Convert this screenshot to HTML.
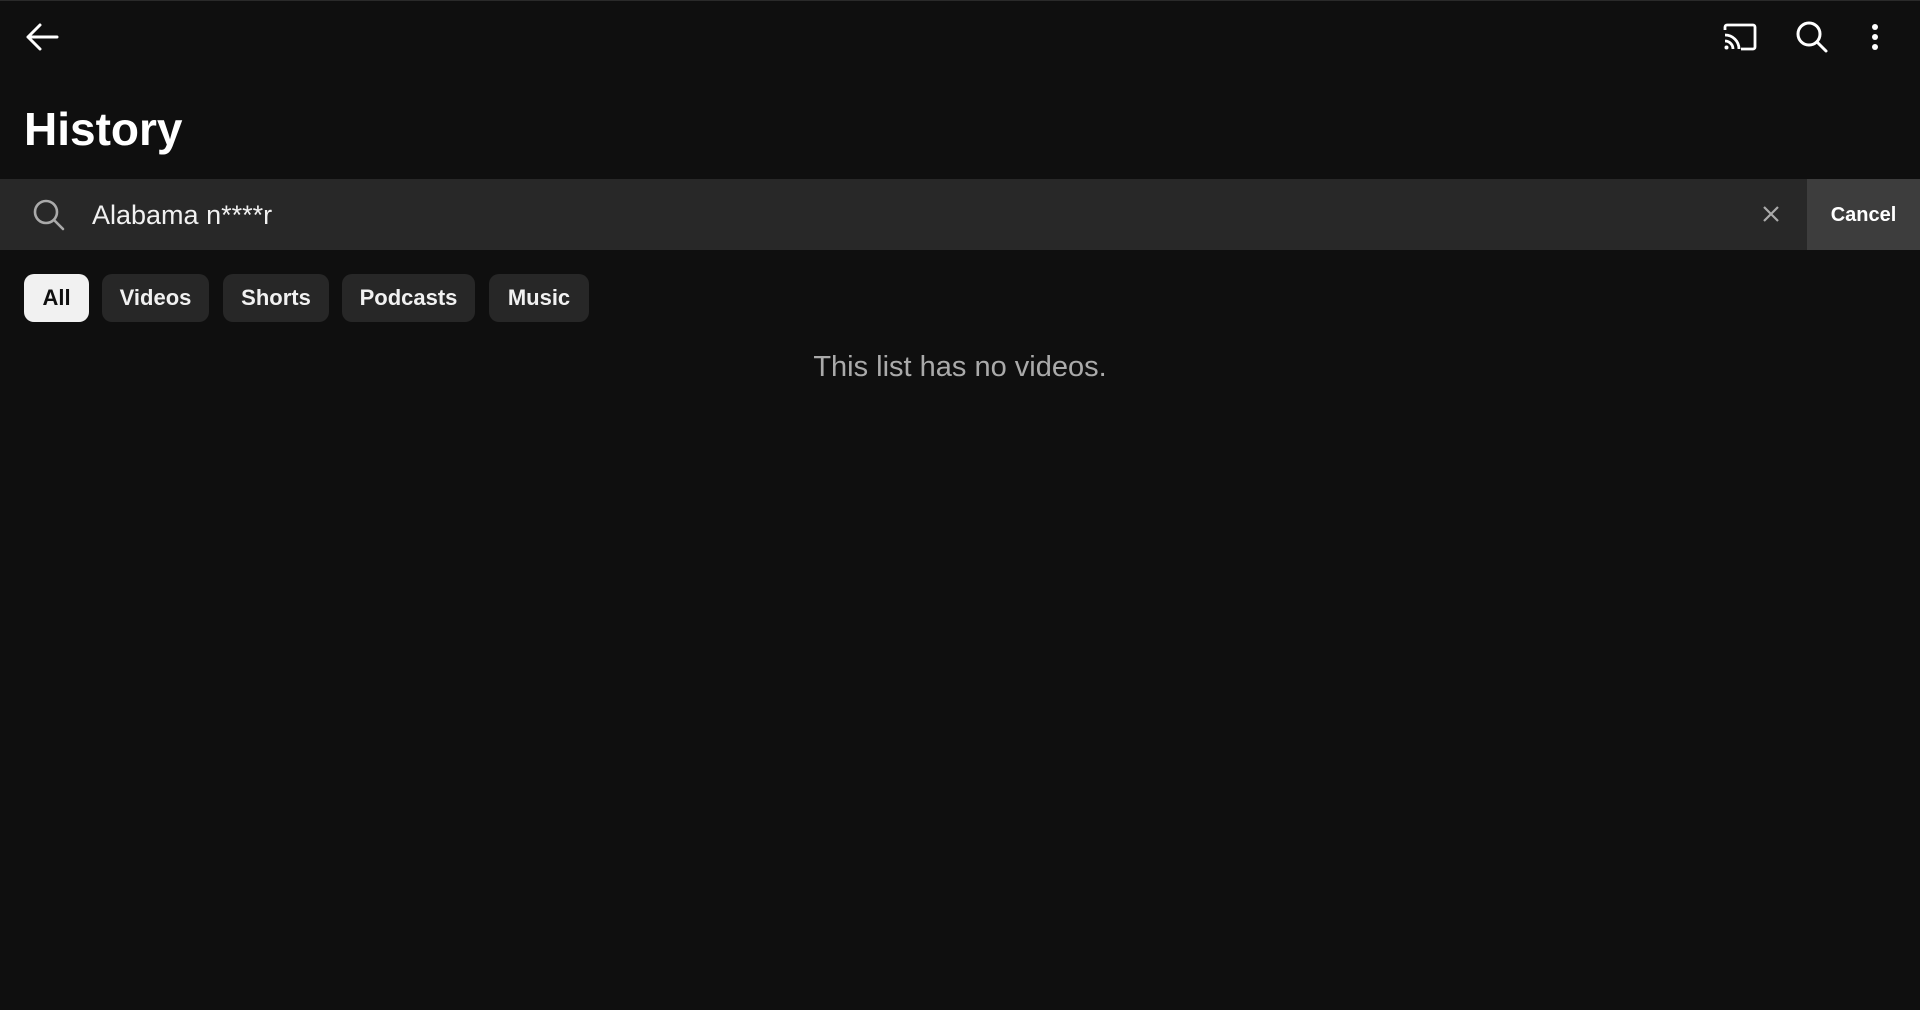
<!DOCTYPE html>
<html><head><meta charset="utf-8">
<style>
html,body{margin:0;padding:0;width:1920px;height:1010px;background:#0f0f0f;overflow:hidden;font-family:"Liberation Sans",Roboto,sans-serif;color:#fff}
.abs{position:absolute}
svg{display:block}
.chip{position:absolute;top:274px;height:48px;border-radius:10px;background:#272727;color:#f1f1f1;font-size:22px;font-weight:bold;line-height:48px;text-align:center}
</style></head><body>
<div class="abs" style="left:0;top:0;width:1920px;height:1px;background:#2a2a2a"></div>
<svg class="abs" style="left:24px;top:22px" width="36" height="30" viewBox="0 0 36 30"><path d="M33 15H4M16 3L4 15l12 12" fill="none" stroke="#fff" stroke-width="3" stroke-linecap="round" stroke-linejoin="round"/></svg>
<svg class="abs" style="left:1722px;top:22px" width="36" height="30" viewBox="0 0 36 30"><path d="M3 8V5a2 2 0 0 1 2-2h26a2 2 0 0 1 2 2v20a2 2 0 0 1-2 2H19" fill="none" stroke="#fff" stroke-width="2.8"/><path d="M3 13a14 14 0 0 1 14 14M3 19a8 8 0 0 1 8 8" fill="none" stroke="#fff" stroke-width="2.8"/><circle cx="4.5" cy="25.5" r="2" fill="#fff"/></svg>
<svg class="abs" style="left:1795px;top:20px" width="34" height="34" viewBox="0 0 34 34"><circle cx="14" cy="14" r="11" fill="none" stroke="#fff" stroke-width="3"/><path d="M22 22l9 9" stroke="#fff" stroke-width="3" stroke-linecap="round"/></svg>
<svg class="abs" style="left:1869px;top:22px" width="12" height="30" viewBox="0 0 12 30"><circle cx="6" cy="5" r="3" fill="#fff"/><circle cx="6" cy="15" r="3" fill="#fff"/><circle cx="6" cy="25" r="3" fill="#fff"/></svg>
<div class="abs" style="left:24px;top:99px;font-size:46px;font-weight:bold;line-height:60px">History</div>
<div class="abs" style="left:0;top:179px;width:1807px;height:71px;background:#282828"></div>
<div class="abs" style="left:1807px;top:179px;width:113px;height:71px;background:#3d3d3d;color:#fff;font-size:20px;font-weight:bold;line-height:73px;text-align:center">Cancel</div>
<svg class="abs" style="left:32px;top:198px" width="34" height="34" viewBox="0 0 34 34"><circle cx="14" cy="14" r="11" fill="none" stroke="#aaa" stroke-width="2.6"/><path d="M22 22l9 9" stroke="#aaa" stroke-width="2.6" stroke-linecap="round"/></svg>
<div class="abs" style="left:92px;top:197px;font-size:27px;line-height:36px;color:#f1f1f1">Alabama n****r</div>
<svg class="abs" style="left:1761px;top:204px" width="20" height="20" viewBox="0 0 20 20"><path d="M3 3l14 14M17 3L3 17" stroke="#aaa" stroke-width="2.2"/></svg>
<div class="chip" style="left:24px;width:65px;background:#f1f1f1;color:#0f0f0f">All</div>
<div class="chip" style="left:102px;width:107px">Videos</div>
<div class="chip" style="left:223px;width:106px">Shorts</div>
<div class="chip" style="left:342px;width:133px">Podcasts</div>
<div class="chip" style="left:489px;width:100px">Music</div>
<div class="abs" style="left:0;width:1920px;top:349px;text-align:center;font-size:29px;line-height:36px;color:#aaa">This list has no videos.</div>
</body></html>
